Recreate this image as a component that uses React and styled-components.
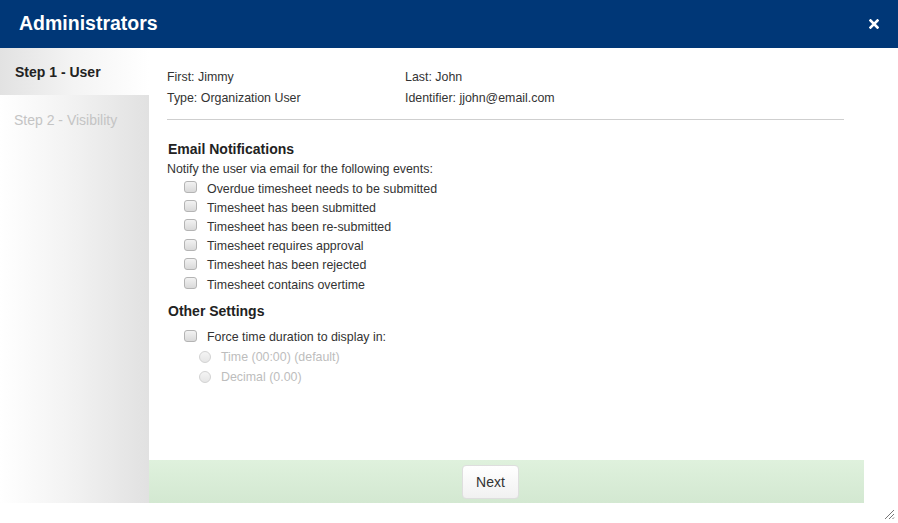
import React from "react";
import styled, { createGlobalStyle } from "styled-components";

const Global = createGlobalStyle`
  html, body { margin: 0; padding: 0; background: #fff; }
  body { font-family: "Liberation Sans", Arial, Helvetica, sans-serif; }
  * { box-sizing: border-box; }
`;

const Dialog = styled.div`
  position: relative;
  width: 898px;
  height: 523px;
  display: flex;
  flex-direction: column;
  background: #fff;
  overflow: hidden;
`;

const Header = styled.div`
  height: 48px;
  flex: none;
  background: #003777;
  display: flex;
  align-items: center;
  justify-content: space-between;
  padding: 0 19px 0 19px;
`;

const Title = styled.h1`
  margin: 0;
  font-size: 19.5px;
  font-weight: bold;
  color: #fff;
  line-height: 1;
  padding-bottom: 1px;
`;

const Close = styled.button`
  border: 0;
  background: none;
  padding: 0;
  display: flex;
  cursor: pointer;
`;

const Body = styled.div`
  flex: 1;
  display: flex;
  padding: 0 34px 20px 0;
  min-height: 0;
`;

const Sidebar = styled.div`
  width: 149px;
  flex: none;
  background: linear-gradient(to right, #ffffff 0%, #f3f3f3 45%, #e1e1e1 100%);
  display: flex;
  flex-direction: column;
`;

const Tab = styled.div`
  height: 47px;
  display: flex;
  align-items: center;
  padding-left: ${(p) => (p.$active ? 15 : 14)}px;
  padding-top: ${(p) => (p.$active ? 1 : 0)}px;
  font-size: 14px;
  font-weight: ${(p) => (p.$active ? "bold" : "normal")};
  color: ${(p) => (p.$active ? "#222" : "#c4c4c4")};
  background: ${(p) =>
    p.$active
      ? "linear-gradient(to right, #e2e2e2 0%, #f4f4f4 50%, #ffffff 100%)"
      : "transparent"};
  margin-top: ${(p) => (p.$active ? 0 : 1)}px;
`;

const Main = styled.div`
  flex: 1;
  display: flex;
  flex-direction: column;
  min-width: 0;
`;

const Content = styled.div`
  flex: 1;
  padding: 19px 20px 0 18px;
  color: #333;
  font-size: 12.4px;
`;

const InfoGrid = styled.div`
  display: grid;
  grid-template-columns: 238px 1fr;
  line-height: 21px;
`;

const Rule = styled.hr`
  border: 0;
  border-top: 1px solid #cfcfcf;
  margin: 10px 0 19px;
`;

const Heading = styled.h2`
  margin: ${(p) => (p.$spaced ? "7px" : "0")} 0 0 1px;
  font-size: 14px;
  font-weight: bold;
  color: #222;
  line-height: 20px;
`;

const Note = styled.div`
  line-height: 20px;
`;

const CheckList = styled.div`
  display: flex;
  flex-direction: column;
  padding-left: 17px;
  margin-top: ${(p) => p.$top || 0}px;
`;

const Row = styled.label`
  display: flex;
  align-items: center;
  height: ${(p) => (p.$tall ? 20 : 19.2)}px;
  color: ${(p) => (p.$disabled ? "#bdbdbd" : "#333")};
  padding-left: ${(p) => p.$indent || 0}px;
`;

const Box = styled.span`
  width: 13px;
  height: 12px;
  flex: none;
  border: 1px solid #b4b4b4;
  border-radius: 3px;
  background: linear-gradient(to bottom, #f2f2f2, #d9d9d9);
  margin-right: 10px;
  margin-top: -3px;
`;

const Radio = styled.span`
  width: 12px;
  height: 12px;
  flex: none;
  border: 1px solid #d2d2d2;
  border-radius: 50%;
  background: linear-gradient(to bottom, #f4f4f4, #e6e6e6);
  margin-right: 10px;
`;

const Footer = styled.div`
  height: 43px;
  flex: none;
  background: linear-gradient(to bottom, #dff1dd, #d3e8d1);
  display: flex;
  align-items: center;
  padding-left: 313px;
`;

const Button = styled.button`
  width: 57px;
  height: 34px;
  border: 1px solid #dedede;
  border-radius: 4px;
  background: linear-gradient(to bottom, #ffffff, #f1f1f1);
  font-family: "Liberation Sans", Arial, sans-serif;
  font-size: 14px;
  color: #333;
  cursor: pointer;
  margin-top: 1px;
`;

const Grip = styled.svg`
  position: absolute;
  right: 3px;
  bottom: 3px;
`;

const notifications = [
  "Overdue timesheet needs to be submitted",
  "Timesheet has been submitted",
  "Timesheet has been re-submitted",
  "Timesheet requires approval",
  "Timesheet has been rejected",
  "Timesheet contains overtime",
];

export default function App() {
  return (
    <Dialog>
      <Global />
      <Header>
        <Title>Administrators</Title>
        <Close aria-label="close">
          <svg width="10" height="10" viewBox="0 0 10 10">
            <path d="M1.5 1.5 L8.5 8.5 M8.5 1.5 L1.5 8.5" stroke="#fff" strokeWidth="2.6" strokeLinecap="square" />
          </svg>
        </Close>
      </Header>
      <Body>
        <Sidebar>
          <Tab $active>Step 1 - User</Tab>
          <Tab>Step 2 - Visibility</Tab>
        </Sidebar>
        <Main>
          <Content>
            <InfoGrid>
              <div>First: Jimmy</div>
              <div>Last: John</div>
              <div>Type: Organization User</div>
              <div>Identifier: jjohn@email.com</div>
            </InfoGrid>
            <Rule />
            <Heading>Email Notifications</Heading>
            <Note>Notify the user via email for the following events:</Note>
            <CheckList>
              {notifications.map((n) => (
                <Row key={n}>
                  <Box />
                  {n}
                </Row>
              ))}
            </CheckList>
            <Heading $spaced>Other Settings</Heading>
            <CheckList $top={6}>
              <Row $tall>
                <Box />
                Force time duration to display in:
              </Row>
              <Row $tall $disabled $indent={15}>
                <Radio />
                Time (00:00) (default)
              </Row>
              <Row $tall $disabled $indent={15}>
                <Radio />
                Decimal (0.00)
              </Row>
            </CheckList>
          </Content>
          <Footer>
            <Button>Next</Button>
          </Footer>
        </Main>
      </Body>
      <Grip width="12" height="12" viewBox="0 0 12 12">
        <path d="M11 2 L2 11 M11 6 L6 11 M11 9.5 L9.5 11" stroke="#777" strokeWidth="1" />
      </Grip>
    </Dialog>
  );
}
